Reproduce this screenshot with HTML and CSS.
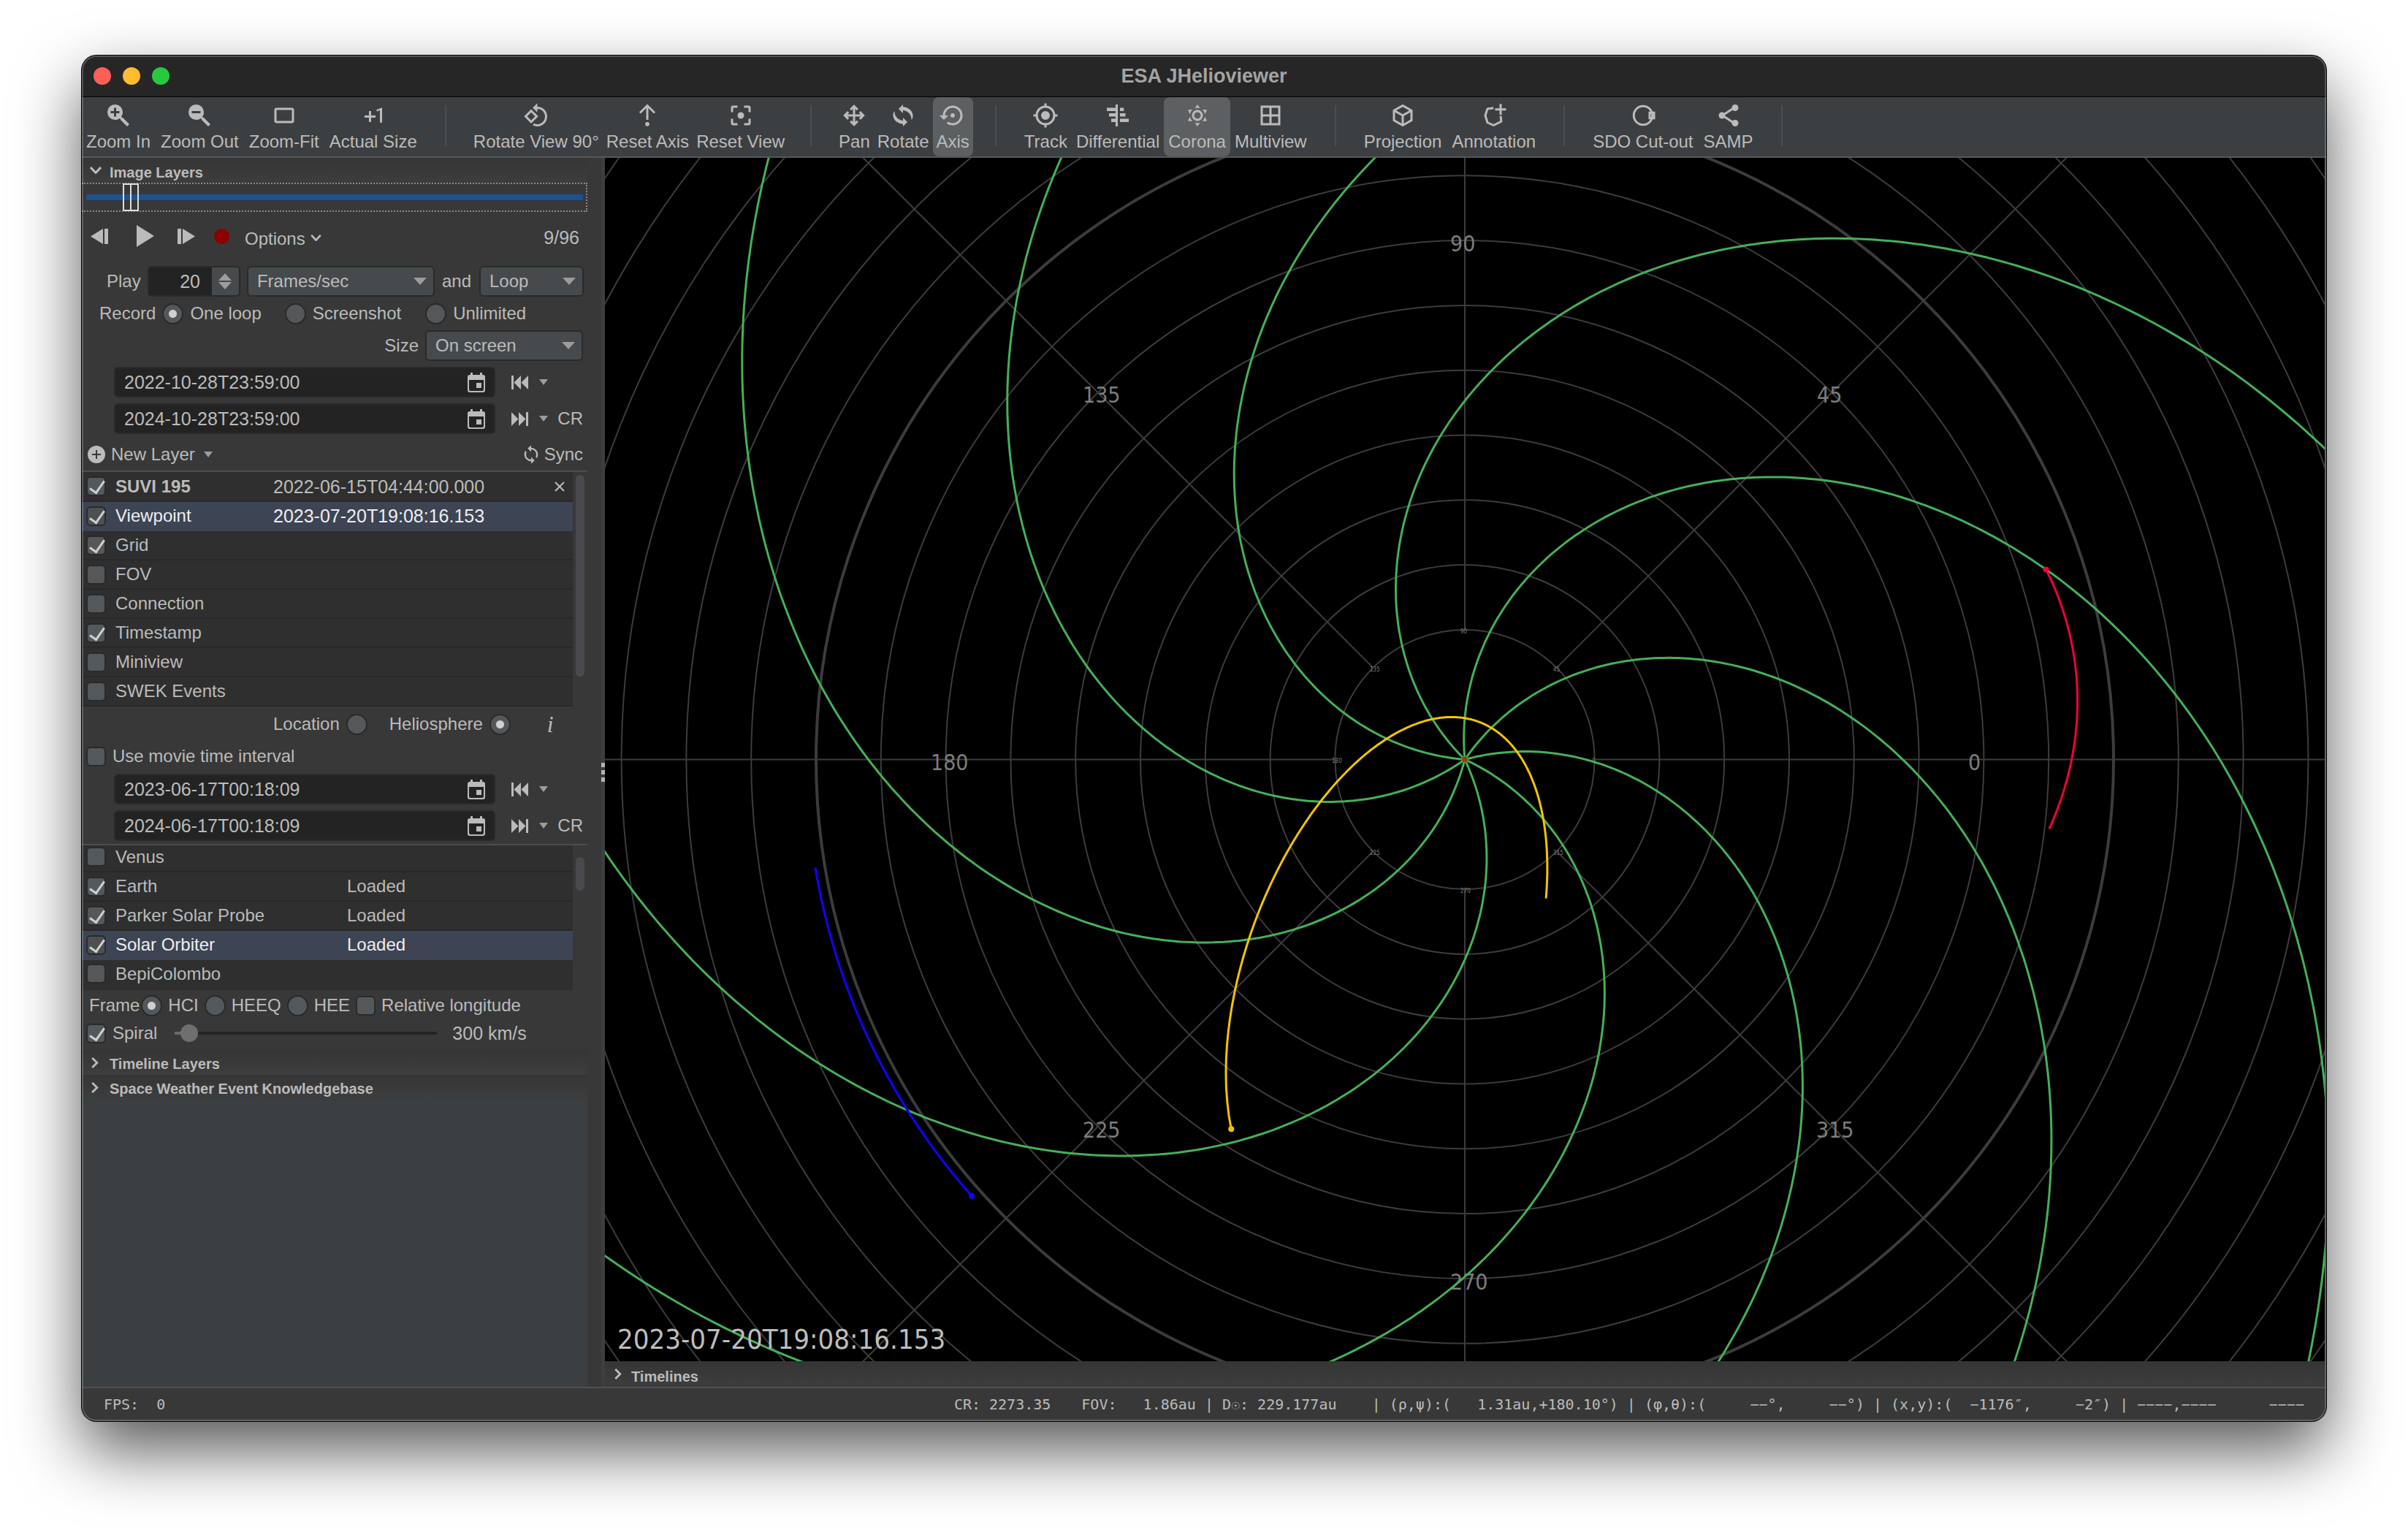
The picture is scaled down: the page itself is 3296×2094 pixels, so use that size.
FILE: index.html
```html
<!DOCTYPE html>
<html lang="en">
<head>
<meta charset="utf-8">
<title>ESA JHelioviewer</title>
<link rel="stylesheet" href="styles.css">
</head>
<body>
<svg class="symbols" aria-hidden="true">
  <symbol id="i-zoom-in" viewBox="0 0 24 24"><path d="M9,2A7,7 0 0,1 16,9C16,10.57 15.5,12 14.61,13.19L15.41,14H16L22,20L20,22L14,16V15.41L13.19,14.61C12,15.5 10.57,16 9,16A7,7 0 0,1 2,9A7,7 0 0,1 9,2M8,5V8H5V10H8V13H10V10H13V8H10V5H8Z"/></symbol>
  <symbol id="i-zoom-out" viewBox="0 0 24 24"><path d="M9,2A7,7 0 0,1 16,9C16,10.57 15.5,12 14.61,13.19L15.41,14H16L22,20L20,22L14,16V15.41L13.19,14.61C12,15.5 10.57,16 9,16A7,7 0 0,1 2,9A7,7 0 0,1 9,2M5,8V10H13V8H5Z"/></symbol>
  <symbol id="i-fit" viewBox="0 0 24 24"><path d="M19,17H5V7H19M19,5H5A2,2 0 0,0 3,7V17A2,2 0 0,0 5,19H19A2,2 0 0,0 21,17V7C21,5.89 20.1,5 19,5Z"/></symbol>
  <symbol id="i-plus-one" viewBox="0 0 24 24"><path d="M10,8H8V12H4V14H8V18H10V14H14V12H10V8M20,18.5H18V7.4L15,8.4V6.7L19.7,5H20V18.5Z"/></symbol>
  <symbol id="i-rotate-90" viewBox="0 0 24 24"><path d="M7.34,6.41L0.86,12.9L7.35,19.38L13.84,12.9L7.34,6.41M3.69,12.9L7.35,9.24L11,12.9L7.34,16.56L3.69,12.9M19.36,6.64C17.61,4.88 15.3,4 13,4V0.76L8.76,5L13,9.24V6C14.79,6 16.58,6.68 17.95,8.05C20.68,10.78 20.68,15.22 17.95,17.95C16.58,19.32 14.79,20 13,20C12.03,20 11.06,19.79 10.16,19.39L8.67,20.88C10,21.62 11.5,22 13,22C15.3,22 17.61,21.12 19.36,19.36C22.88,15.85 22.88,10.15 19.36,6.64Z"/></symbol>
  <symbol id="i-reset-axis" viewBox="0 0 24 24"><path d="M12,1.6L19.4,9L18,10.4L13,5.4V16H11V5.4L6,10.4L4.6,9ZM12,18A1.9,1.9 0 1,1 12,21.8A1.9,1.9 0 1,1 12,18Z"/></symbol>
  <symbol id="i-reset-view" viewBox="0 0 24 24"><path d="M12,9A3,3 0 1,1 12,15A3,3 0 1,1 12,9M19,19H15V21H19A2,2 0 0,0 21,19V15H19M19,3H15V5H19V9H21V5A2,2 0 0,0 19,3M5,5H9V3H5A2,2 0 0,0 3,5V9H5M5,15H3V19A2,2 0 0,0 5,21H9V19H5V15Z"/></symbol>
  <symbol id="i-pan" viewBox="0 0 24 24"><path d="M13,11H18L16.5,9.5L17.92,8.08L21.84,12L17.92,15.92L16.5,14.5L18,13H13V18L14.5,16.5L15.92,17.92L12,21.84L8.08,17.92L9.5,16.5L11,18V13H6L7.5,14.5L6.08,15.92L2.16,12L6.08,8.08L7.5,9.5L6,11H11V6L9.5,7.5L8.08,6.08L12,2.16L15.92,6.08L14.5,7.5L13,6V11Z"/></symbol>
  <symbol id="i-rotate" viewBox="0 0 24 24"><path d="M8,6L12,2V4.2C17.5,4.6 21.5,8.5 21,13C20.9,14.4 20.3,15.4 19.7,16.2C20,11.5 17,8.2 12,7.2V10ZM16,18L12,22V19.8C6.5,19.4 2.5,15.5 3,11C3.1,9.6 3.7,8.6 4.3,7.8C4,12.5 7,15.8 12,16.8V14Z"/></symbol>
  <symbol id="i-sync" viewBox="0 0 24 24"><path d="M12,18A6,6 0 0,1 6,12C6,11 6.25,10.03 6.7,9.2L5.24,7.74C4.46,8.97 4,10.43 4,12A8,8 0 0,0 12,20V23L16,19L12,15M12,4V1L8,5L12,9V6A6,6 0 0,1 18,12C18,13 17.75,13.97 17.3,14.8L18.76,16.26C19.54,15.03 20,13.57 20,12A8,8 0 0,0 12,4Z"/></symbol>
  <symbol id="i-axis" viewBox="0 0 24 24"><path d="M14,12A2,2 0 1,0 10,12A2,2 0 1,0 14,12M12,3A9,9 0 0,0 3,12H0L4,16L8,12H5A7,7 0 0,1 12,5A7,7 0 0,1 19,12A7,7 0 0,1 12,19C10.5,19 9.09,18.5 7.94,17.7L6.5,19.14C8.04,20.3 9.94,21 12,21A9,9 0 0,0 21,12A9,9 0 0,0 12,3Z"/></symbol>
  <symbol id="i-track" viewBox="0 0 24 24"><path d="M12,8A4,4 0 0,1 16,12A4,4 0 0,1 12,16A4,4 0 0,1 8,12A4,4 0 0,1 12,8M3.05,13H1V11H3.05C3.5,6.83 6.83,3.5 11,3.05V1H13V3.05C17.17,3.5 20.5,6.83 20.95,11H23V13H20.95C20.5,17.17 17.17,20.5 13,20.95V23H11V20.95C6.83,20.5 3.5,17.17 3.05,13M12,5A7,7 0 0,0 5,12A7,7 0 0,0 12,19A7,7 0 0,0 19,12A7,7 0 0,0 12,5Z"/></symbol>
  <symbol id="i-diff" viewBox="0 0 24 24"><path d="M10,2H12V22H10V18H6V15H10V13H4V10H10V8H2V5H10ZM14,5H17.5V8H14ZM14,10H19V13H14ZM14,15H22V18H14Z"/></symbol>
  <symbol id="i-corona" viewBox="0 0 24 24"><path fill-rule="evenodd" d="M12,7A5,5 0 1,1 12,17A5,5 0 1,1 12,7M12,9A3,3 0 1,0 12,15A3,3 0 1,0 12,9M12,2L14.39,5.42A7.7,7.7 0 0,0 9.61,5.42ZM12,22L9.61,18.58A7.7,7.7 0 0,0 14.39,18.58ZM3.34,7L7.5,6.65A7,7 0 0,0 5.14,10.79ZM3.36,17L5.12,13.23A7,7 0 0,0 7.5,17.37ZM20.65,7L18.88,10.79A7,7 0 0,0 16.5,6.65ZM20.64,17L16.5,17.36A7,7 0 0,0 18.87,13.22Z"/></symbol>
  <symbol id="i-multi" viewBox="0 0 24 24"><path fill-rule="evenodd" d="M3,3H21V21H3ZM5,5V11H11V5ZM13,5V11H19V5ZM5,13V19H11V13ZM13,13V19H19V13Z"/></symbol>
  <symbol id="i-cube" viewBox="0 0 24 24"><path d="M21,16.5C21,16.88 20.79,17.21 20.47,17.38L12.57,21.82C12.41,21.94 12.21,22 12,22C11.79,22 11.59,21.94 11.43,21.82L3.53,17.38C3.21,17.21 3,16.88 3,16.5V7.5C3,7.12 3.21,6.79 3.53,6.62L11.43,2.18C11.59,2.06 11.79,2 12,2C12.21,2 12.41,2.06 12.57,2.18L20.47,6.62C20.79,6.79 21,7.12 21,7.5V16.5M12,4.15L6.04,7.5L12,10.85L17.96,7.5L12,4.15M5,15.91L11,19.29V12.58L5,9.21V15.91M19,15.91V9.21L13,12.58V19.29L19,15.91Z"/></symbol>
  <symbol id="i-annotate" viewBox="0 0 24 24"><path d="M18,12.5L18.6,17.5L11.6,21L6,18.5L4,12L6,6L11.5,5.2" fill="none" stroke="currentColor" stroke-width="2" stroke-linejoin="round"/><path d="M17,1.5H19V5.5H23V7.5H19V11.5H17V7.5H13V5.5H17Z"/></symbol>
  <symbol id="i-cutout" viewBox="0 0 24 24"><circle cx="12" cy="12" r="8.5" fill="none" stroke="currentColor" stroke-width="2"/><path fill-rule="evenodd" d="M17,8.5H23V15.5H17ZM19,10.5V13.5H21.2V10.5Z"/></symbol>
  <symbol id="i-share" viewBox="0 0 24 24"><path d="M17.6,4.6L6.4,12L17.6,19.4" fill="none" stroke="currentColor" stroke-width="2"/><circle cx="18" cy="5" r="3"/><circle cx="6" cy="12" r="3"/><circle cx="18" cy="19" r="3"/></symbol>
  <symbol id="i-calendar" viewBox="0 0 24 27"><path fill-rule="evenodd" d="M4,0H7V3H17V0H20V3H21A3,3 0 0,1 24,6V24A3,3 0 0,1 21,27H3A3,3 0 0,1 0,24V6A3,3 0 0,1 3,3H4ZM2,10V23A2,2 0 0,0 4,25H20A2,2 0 0,0 22,23V10ZM12,14H19V21H12Z"/></symbol>
  <symbol id="i-skip-back" viewBox="0 0 23 19"><path d="M0,0H3V19H0ZM13,0V19L3.5,9.5ZM23,0V19L13.5,9.5Z"/></symbol>
  <symbol id="i-skip-fwd" viewBox="0 0 23 19"><path d="M20,0H23V19H20ZM0,0V19L9.5,9.5ZM10,0V19L19.5,9.5Z"/></symbol>
  <symbol id="i-chev-down" viewBox="0 0 16 10"><path d="M1,1L8,8.5L15,1" fill="none" stroke="currentColor" stroke-width="3"/></symbol>
  <symbol id="i-chev-right" viewBox="0 0 10 16"><path d="M1,1L8,8L1,15" fill="none" stroke="currentColor" stroke-width="3"/></symbol>
</svg>

<div class="window">
  <header class="titlebar">
    <div class="lights"><button class="light light-close" aria-label="Close"></button><button class="light light-min" aria-label="Minimise"></button><button class="light light-max" aria-label="Maximise"></button></div>
    <h1 class="title">ESA JHelioviewer</h1>
  </header>

  <nav class="toolbar">
    <div class="tool-group">
      <button class="tool"><svg><use href="#i-zoom-in"/></svg>Zoom In</button>
      <button class="tool"><svg><use href="#i-zoom-out"/></svg>Zoom Out</button>
      <button class="tool"><svg><use href="#i-fit"/></svg>Zoom-Fit</button>
      <button class="tool"><svg><use href="#i-plus-one"/></svg>Actual Size</button>
    </div>
    <div class="tool-group tight">
      <button class="tool"><svg><use href="#i-rotate-90"/></svg>Rotate View 90°</button>
      <button class="tool"><svg><use href="#i-reset-axis"/></svg>Reset Axis</button>
      <button class="tool"><svg><use href="#i-reset-view"/></svg>Reset View</button>
    </div>
    <div class="tool-group tight">
      <button class="tool"><svg><use href="#i-pan"/></svg>Pan</button>
      <button class="tool"><svg><use href="#i-rotate"/></svg>Rotate</button>
      <button class="tool tool-on"><svg><use href="#i-axis"/></svg>Axis</button>
    </div>
    <div class="tool-group plain-group">
      <button class="tool"><svg><use href="#i-track"/></svg>Track</button>
      <button class="tool"><svg><use href="#i-diff"/></svg>Differential</button>
      <button class="tool tool-on"><svg><use href="#i-corona"/></svg>Corona</button>
      <button class="tool"><svg><use href="#i-multi"/></svg>Multiview</button>
    </div>
    <div class="tool-group">
      <button class="tool"><svg><use href="#i-cube"/></svg>Projection</button>
      <button class="tool"><svg><use href="#i-annotate"/></svg>Annotation</button>
    </div>
    <div class="tool-group">
      <button class="tool"><svg><use href="#i-cutout"/></svg>SDO Cut-out</button>
      <button class="tool"><svg><use href="#i-share"/></svg>SAMP</button>
    </div>
  </nav>

  <main class="main">
    <aside class="sidebar">
      <div class="panels">
        <button class="section"><svg class="chev chev-down"><use href="#i-chev-down"/></svg>Image Layers</button>
        <div class="panel">
          <div class="timeline"><input class="timeline-input" type="range" min="1" max="96" value="9" aria-label="Frame"></div>

          <div class="transport">
            <button class="plain" aria-label="Previous frame"><svg width="25" height="21" viewBox="0 0 25 21"><path d="M17,0V21L0,10.5ZM19,0H24V21H19Z"/></svg></button>
            <button class="plain" aria-label="Play"><svg width="24" height="30" viewBox="0 0 24 30"><path d="M0,0L24,15L0,30Z"/></svg></button>
            <button class="plain" aria-label="Next frame"><svg width="25" height="21" viewBox="0 0 25 21"><path d="M8,0V21L25,10.5ZM1,0H6V21H1Z"/></svg></button>
            <button class="record" aria-label="Record"></button>
            <button class="plain options">Options <svg width="15" height="9"><use href="#i-chev-down"/></svg></button>
            <span class="frame-count">9/96</span>
          </div>

          <div class="row row-play">
            <label for="speed">Play</label>
            <span class="spinner"><input id="speed" type="text" value="20"><span class="spin-buttons"><button class="spin-up" aria-label="Increase"></button><button class="spin-down" aria-label="Decrease"></button></span></span>
            <span class="select select-unit"><select aria-label="Speed unit"><option>Frames/sec</option></select></span>
            <label for="mode">and</label>
            <span class="select select-mode"><select id="mode"><option>Loop</option></select></span>
          </div>

          <div class="row row-record">
            <span class="record-label">Record</span>
            <label class="opt opt-one"><input type="radio" name="rec" checked>One loop</label>
            <label class="opt opt-shot"><input type="radio" name="rec">Screenshot</label>
            <label class="opt"><input type="radio" name="rec">Unlimited</label>
          </div>

          <div class="row row-size">
            <label for="size">Size</label>
            <span class="select select-size"><select id="size"><option>On screen</option></select></span>
          </div>

          <div class="dates">
            <div class="date-row">
              <span class="date"><input type="text" value="2022-10-28T23:59:00" aria-label="Start time"><button class="plain" aria-label="Pick date"><svg width="24" height="27"><use href="#i-calendar"/></svg></button></span>
              <button class="plain skip" aria-label="Shift back"><svg width="23" height="19"><use href="#i-skip-back"/></svg><i class="tri"></i></button>
            </div>
            <div class="date-row">
              <span class="date"><input type="text" value="2024-10-28T23:59:00" aria-label="End time"><button class="plain" aria-label="Pick date"><svg width="24" height="27"><use href="#i-calendar"/></svg></button></span>
              <button class="plain skip" aria-label="Shift forward"><svg width="23" height="19"><use href="#i-skip-fwd"/></svg><i class="tri"></i></button>
              <button class="plain cr">CR</button>
            </div>
          </div>

          <div class="row row-new">
            <button class="plain new-layer"><svg width="24" height="24" viewBox="0 0 24 24"><path fill-rule="evenodd" d="M12,0A12,12 0 1,1 12,24A12,12 0 1,1 12,0M11,6V11H6V13H11V18H13V13H18V11H13V6Z"/></svg>New Layer <i class="tri"></i></button>
            <button class="plain sync"><svg width="28" height="28"><use href="#i-sync"/></svg>Sync</button>
          </div>

          <div class="list">
            <table class="layers">
              <colgroup><col class="c-check"><col class="c-name"><col><col class="c-x"></colgroup>
              <tr><td><input type="checkbox" id="l1" checked></td><td><label for="l1"><b>SUVI 195</b></label></td><td class="num">2022-06-15T04:44:00.000</td><td><button class="plain" aria-label="Remove layer"><svg width="14" height="14" viewBox="0 0 14 14"><path d="M1,1L13,13M13,1L1,13" fill="none" stroke="currentColor" stroke-width="2"/></svg></button></td></tr>
              <tr class="selected"><td><input type="checkbox" id="l2" checked></td><td><label for="l2">Viewpoint</label></td><td class="num">2023-07-20T19:08:16.153</td><td></td></tr>
              <tr><td><input type="checkbox" id="l3" checked></td><td><label for="l3">Grid</label></td><td></td><td></td></tr>
              <tr><td><input type="checkbox" id="l4"></td><td><label for="l4">FOV</label></td><td></td><td></td></tr>
              <tr><td><input type="checkbox" id="l5"></td><td><label for="l5">Connection</label></td><td></td><td></td></tr>
              <tr><td><input type="checkbox" id="l6" checked></td><td><label for="l6">Timestamp</label></td><td></td><td></td></tr>
              <tr><td><input type="checkbox" id="l7"></td><td><label for="l7">Miniview</label></td><td></td><td></td></tr>
              <tr><td><input type="checkbox" id="l8"></td><td><label for="l8">SWEK Events</label></td><td></td><td></td></tr>
            </table>
            <div class="scroll"><div class="thumb thumb-long"></div></div>
          </div>

          <div class="row row-location">
            <label class="opt">Location<input type="radio" name="loc"></label>
            <label class="opt opt-helio">Heliosphere<input type="radio" name="loc" checked></label>
            <button class="plain info" aria-label="Info">i</button>
          </div>
          <div class="row row-interval"><label class="opt"><input type="checkbox">Use movie time interval</label></div>

          <div class="dates dates-view">
            <div class="date-row">
              <span class="date"><input type="text" value="2023-06-17T00:18:09" aria-label="Viewpoint start"><button class="plain" aria-label="Pick date"><svg width="24" height="27"><use href="#i-calendar"/></svg></button></span>
              <button class="plain skip" aria-label="Shift back"><svg width="23" height="19"><use href="#i-skip-back"/></svg><i class="tri"></i></button>
            </div>
            <div class="date-row">
              <span class="date"><input type="text" value="2024-06-17T00:18:09" aria-label="Viewpoint end"><button class="plain" aria-label="Pick date"><svg width="24" height="27"><use href="#i-calendar"/></svg></button></span>
              <button class="plain skip" aria-label="Shift forward"><svg width="23" height="19"><use href="#i-skip-fwd"/></svg><i class="tri"></i></button>
              <button class="plain cr">CR</button>
            </div>
          </div>

          <div class="list list-bodies">
            <table class="layers bodies">
              <colgroup><col class="c-check"><col class="c-body"><col></colgroup>
              <tr><td><input type="checkbox" id="b1"></td><td><label for="b1">Venus</label></td><td></td></tr>
              <tr><td><input type="checkbox" id="b2" checked></td><td><label for="b2">Earth</label></td><td>Loaded</td></tr>
              <tr><td><input type="checkbox" id="b3" checked></td><td><label for="b3">Parker Solar Probe</label></td><td>Loaded</td></tr>
              <tr class="selected"><td><input type="checkbox" id="b4" checked></td><td><label for="b4">Solar Orbiter</label></td><td>Loaded</td></tr>
              <tr><td><input type="checkbox" id="b5"></td><td><label for="b5">BepiColombo</label></td><td></td></tr>
            </table>
            <div class="scroll"><div class="thumb thumb-short"></div></div>
          </div>

          <div class="row row-frame">
            <span>Frame</span>
            <label class="opt"><input type="radio" name="frame" checked>HCI</label>
            <label class="opt"><input type="radio" name="frame">HEEQ</label>
            <label class="opt"><input type="radio" name="frame">HEE</label>
            <label class="opt"><input type="checkbox">Relative longitude</label>
          </div>
          <div class="row row-spiral">
            <label class="opt"><input type="checkbox" checked>Spiral</label>
            <input class="speed" type="range" min="250" max="2500" value="300" aria-label="Spiral speed">
            <span class="num">300 km/s</span>
          </div>
        </div>
        <button class="section section-closed"><svg class="chev chev-right"><use href="#i-chev-right"/></svg>Timeline Layers</button>
        <button class="section section-closed"><svg class="chev chev-right"><use href="#i-chev-right"/></svg>Space Weather Event Knowledgebase</button>
      </div>
      <div class="gutter"></div>
      <div class="divider"><i></i><i></i><i></i></div>
    </aside>

    <section class="stage">
      <div class="view">
        <svg class="sky" viewBox="-1177 -824 2354 1648" preserveAspectRatio="xMidYMid slice">
          <g id="grid"></g>
          <g class="small-labels">
            <text x="174" y="4">0</text><text x="121" y="-121">45</text><text x="-6" y="-173">90</text><text x="-130" y="-121">135</text><text x="-182" y="4">180</text><text x="-130" y="130">225</text><text x="-6" y="182">270</text><text x="121" y="130">315</text>
          </g>
          <g class="labels">
            <text x="689" y="14">0</text><text x="482" y="-489">45</text><text x="-20" y="-696">90</text><text x="-523" y="-489">135</text><text x="-731" y="14">180</text><text x="-523" y="517">225</text><text x="-20" y="725">270</text><text x="481" y="517">315</text>
          </g>
          <g id="spirals"></g>
          <circle class="sun" r="4"/>
          <g id="orbits"></g>
        </svg>
        <p class="stamp">2023-07-20T19:08:16.153</p>
      </div>
      <button class="section section-stage"><svg class="chev chev-right"><use href="#i-chev-right"/></svg>Timelines</button>
    </section>
  </main>

  <footer class="status">
    <span>FPS:  0</span>
    <span class="status-cr">CR: 2273.35</span>
    <span>FOV:   1.86au | D<i class="cell">☉</i>: 229.177au    | (ρ,ψ):(   1.31au,+180.10°) | (φ,θ):(     −−°,     −−°) | (x,y):(  −1176″,     −2″) | −−−−,−−−−      −−−−</span>
  </footer>
</div>
<script src="script.js"></script>
</body>
</html>
```
FILE: styles.css
```css
* { box-sizing: border-box; }

body {
  margin: 0;
  min-height: 100vh;
  display: flex;
  padding: 76px 112px 149px;
  background: #fff;
  color: #bbb;
  font: 24px/28px "Liberation Sans", Arial, sans-serif;
}

button, input, select { font: inherit; color: inherit; margin: 0; }
button { border: 0; padding: 0; background: none; }
svg { fill: currentColor; display: block; flex: none; }
.symbols { position: absolute; width: 0; height: 0; }

.window {
  position: relative;
  flex: 1;
  min-width: 0;
  display: flex;
  flex-direction: column;
  border-radius: 20px;
  overflow: hidden;
  background: #383838;
  box-shadow: 0 0 0 1px #000, 0 40px 90px rgba(0, 0, 0, .66);
}
.window::after {
  content: "";
  position: absolute;
  inset: 0;
  border-radius: 20px;
  box-shadow: inset 0 0 0 2px rgba(255, 255, 255, .22);
  pointer-events: none;
}

/* Title bar */
.titlebar {
  display: grid;
  grid-template-columns: 1fr auto 1fr;
  align-items: center;
  height: 57px;
  padding: 0 16px;
  background: #262626;
  border-bottom: 1px solid #000;
}
.lights { display: flex; gap: 16px; }
.light { width: 24px; height: 24px; border-radius: 50%; }
.light-close { background: #ff5f57; }
.light-min { background: #febc2e; }
.light-max { background: #28c840; }
.title { margin: 0; font-size: 27px; font-weight: 700; color: #a3a3a3; }

/* Toolbar */
.toolbar {
  display: flex;
  height: 83px;
  background: #3c3f41;
  border-bottom: 2px solid #54585a;
}
.tool-group { display: flex; gap: 2px; position: relative; padding-right: 34px; margin-right: 32px; }
.tool-group:last-child { margin-right: 0; }
.tool-group::after {
  content: "";
  position: absolute;
  right: 0;
  top: 11px;
  width: 2px;
  height: 56px;
  background: #4b4e50;
}
.tight, .plain-group { gap: 0; }
.tight { padding-right: 32px; }
.tool {
  display: flex;
  flex-direction: column;
  align-items: center;
  gap: 4px;
  padding: 7px 6px 0;
  border-radius: 8px;
  white-space: nowrap;
}
.tight .tool { padding: 7px 5px 0; }
.tool svg { width: 36px; height: 36px; }
.tool-on { background: #5c6062; }

/* Main split */
.main { flex: 1; display: flex; min-height: 0; }
.sidebar { display: flex; width: 716px; flex: none; }
.panels { flex: 1; min-width: 0; background: #3c3f41; }
.gutter { width: 19px; background: #383838; }
.divider {
  width: 5px;
  display: flex;
  flex-direction: column;
  justify-content: center;
  gap: 4px;
  background: #3c3f41;
}
.divider i { height: 6px; background: #b4b4b4; }

.section {
  display: flex;
  align-items: center;
  width: 100%;
  height: 34px;
  padding: 6px 0 0 38px;
  position: relative;
  font-size: 20px;
  font-weight: 700;
  background: linear-gradient(#353535, #3d3d3d);
}
.chev { position: absolute; }
.chev-down { left: 11px; top: 12px; width: 16px; height: 10px; }
.chev-right { left: 13px; top: 10px; width: 10px; height: 15px; }
.section-closed { height: 32px; margin-bottom: 2px; }
.panel { background: #383838; }

.timeline {
  height: 40px;
  padding-right: 4px;
  border: 2px dotted #8a8a8a;
  border-left-width: 0;
  background: linear-gradient(#1d5290, #1d5290) 6px 14px / calc(100% - 10px) 8px no-repeat;
}
.timeline-input { appearance: none; display: block; width: 100%; height: 36px; background: none; }
.timeline-input::-webkit-slider-thumb {
  appearance: none;
  width: 22px;
  height: 38px;
  border: 2px solid #ddd;
  background: linear-gradient(#ddd, #ddd) center / 2px 100% no-repeat;
}

.plain { display: flex; align-items: center; }
.transport { display: flex; align-items: center; height: 66px; padding: 0 11px 0 12px; margin-bottom: 8px; }
.transport .plain:nth-child(2) { margin: 0 31px 0 38px; }
.record { width: 21px; height: 21px; margin: 0 21px 0 26px; border-radius: 50%; background: #8b0000; }
.options { gap: 7px; padding-top: 8px; }
.options svg { margin-bottom: 4px; }
.frame-count { margin-left: auto; padding-top: 4px; font-size: 25px; }

.row { display: flex; align-items: center; white-space: nowrap; }
.row-play { height: 42px; padding: 0 5px 0 34px; }
.spinner {
  display: flex;
  width: 127px;
  height: 42px;
  margin: 0 9px 0 auto;
  border: 2px solid #2a2a2a;
  border-radius: 6px;
  background: #232323;
  overflow: hidden;
}
.spinner input { width: 86px; padding: 0 16px 0 0; border: 0; background: none; text-align: right; font-size: 25px; }
.spin-buttons { flex: 1; display: flex; flex-direction: column; justify-content: center; align-items: center; gap: 2px; background: #464a4c; }
.spin-up, .spin-down { border: 9px solid transparent; }
.spin-up { border-top: 0; border-bottom: 10px solid #9c9c9c; }
.spin-down { border-bottom: 0; border-top: 10px solid #9c9c9c; }

.select { position: relative; display: block; height: 42px; }
.select::after {
  content: "";
  position: absolute;
  right: 11px;
  top: 16px;
  border: 9px solid transparent;
  border-top: 10px solid #9c9c9c;
  border-bottom: 0;
  pointer-events: none;
}
.select select {
  appearance: none;
  width: 100%;
  height: 100%;
  padding: 0 12px;
  border: 2px solid #2a2a2a;
  border-radius: 6px;
  background: #464a4c;
}
.select-unit { width: 257px; margin-right: 10px; }
.select-mode { width: 143px; margin-left: 11px; }
.select-size { width: 216px; }

.row-record { height: 46px; padding-left: 24px; }
.record-label { margin-right: 9px; }
.opt { display: flex; align-items: center; gap: 9px; }
.opt-one { margin-right: 32px; }
.opt-shot { margin-right: 33px; }
.row-size { height: 42px; padding-right: 6px; justify-content: flex-end; gap: 9px; }

input[type="radio"], input[type="checkbox"] {
  appearance: none;
  position: relative;
  flex: none;
  display: block;
  border: 2px solid #2a2a2a;
  background: #54585b;
}
input[type="radio"] { width: 29px; height: 29px; border-radius: 50%; }
input[type="radio"]:checked { background: radial-gradient(circle, #d0d0d0 5px, #54585b 6px); }
input[type="checkbox"] { width: 27px; height: 27px; border-radius: 6px; }
input[type="checkbox"]:checked::after {
  content: "";
  position: absolute;
  left: 7px;
  top: 0;
  width: 9px;
  height: 18px;
  border: solid #d0d0d0;
  border-width: 0 3px 3px 0;
  transform: rotate(35deg);
}

.dates { display: flex; flex-direction: column; gap: 8px; padding: 8px 6px 0 44px; }
.date-row { display: flex; align-items: center; }
.date {
  display: flex;
  align-items: center;
  width: 522px;
  height: 42px;
  margin-right: 22px;
  padding: 0 12px;
  border: 2px solid #2a2a2a;
  border-radius: 6px;
  background: #232323;
}
.date input { flex: 1; min-width: 0; padding: 0; border: 0; background: none; font-size: 25px; }
.skip { gap: 15px; }
.tri { border: 6px solid transparent; border-top: 8px solid #9c9c9c; border-bottom: 0; }
.cr { margin-left: auto; }
.row-new { height: 50px; padding: 6px 6px 0 8px; justify-content: space-between; }
.new-layer { gap: 8px; }
.new-layer .tri { margin-left: 4px; }
.sync { gap: 4px; }

.list { display: flex; align-items: flex-start; border-top: 2px solid #4d4d4d; overflow: hidden; }
.layers { flex: 1; table-layout: fixed; border-collapse: collapse; background: #2f2f2f; }
.layers td { height: 40px; padding: 0; border-bottom: 2px solid #282828; white-space: nowrap; }
.layers td:first-child { padding-left: 6px; }
.layers label { display: block; }
.num { font-size: 25px; }
.c-check { width: 46px; }
.c-name { width: 216px; }
.c-x { width: 25px; }
.c-body { width: 317px; }
.selected { background: #3d4454; color: #eee; }
.selected td { border-bottom-color: #3d4454; }
.selected input { background: #4d4f52; }
.scroll { width: 20px; padding: 4px 4px 0; }
.thumb { border-radius: 6px; background: #4a4a4e; }
.thumb-long { height: 276px; }
.thumb-short { height: 46px; margin-top: 12px; }

.row-location { height: 50px; padding: 0 0 2px 262px; }
.opt-helio { margin-left: 30px; }
.info { margin-left: 50px; font: italic 32px/32px "Liberation Serif", serif; }
.row-interval { height: 36px; padding-left: 6px; }
.dates-view { padding-top: 6px; margin-bottom: 4px; }
.list-bodies { height: 202px; }
.bodies { margin-top: -4px; border-bottom: 4px solid #2f2f2f; }

.row-frame { height: 38px; padding-left: 10px; gap: 2px; }
.row-frame .opt { margin-right: 6px; gap: 8px; }
.row-spiral { height: 42px; padding: 0 0 4px 6px; }
.speed { appearance: none; width: 359px; height: 24px; margin: 0 21px 0 24px; border-radius: 2px; background: linear-gradient(90deg, #6a6a6a 20px, #242424 20px) center / 100% 4px no-repeat; }
.speed::-webkit-slider-thumb { appearance: none; width: 24px; height: 24px; border-radius: 50%; background: #6e6f70; }

/* Heliosphere view */
.stage { flex: 1; min-width: 0; display: flex; flex-direction: column; padding-right: 2px; }
.view { flex: 1; position: relative; overflow: hidden; background: #000; }
.sky { position: absolute; inset: 0; width: 100%; height: 100%; fill: none; }
.ring, .ray { stroke: #3c3c3c; stroke-width: 2; }
.ring-au { stroke-width: 4; }
.labels, .small-labels { fill: #7c7c7c; font-family: "DejaVu Sans Condensed", "DejaVu Sans", sans-serif; font-stretch: condensed; }
.labels { font-size: 30px; }
.small-labels { font-size: 8px; }
.spiral { stroke: #45b058; stroke-width: 3; }
.orbit { stroke-width: 3; }
.sun { fill: #a03c10; }
.stamp {
  position: absolute;
  left: 17px;
  bottom: 8px;
  margin: 0;
  font: condensed 38px/44px "DejaVu Sans Condensed", "DejaVu Sans", sans-serif;
  color: #bdbdbd;
}
.section-stage { height: 35px; padding-left: 36px; }

.status {
  display: flex;
  align-items: center;
  height: 47px;
  padding: 0 30px 2px 30px;
  border-top: 2px solid #4f4f4f;
  font: 20px/24px "DejaVu Sans Mono", monospace;
  white-space: pre;
}
.status-cr { margin: 0 42px 0 auto; }
.cell { display: inline-block; width: 12px; font: normal 14px/20px "DejaVu Sans", sans-serif; }
```
FILE: script.js
```js
// Units are screen pixels with the Sun at the origin; y points down.
const AU = 888;
const MAX_R = 1500;
const NS = "http://www.w3.org/2000/svg";

function add(parent, tag, attrs) {
  const el = document.createElementNS(NS, tag);
  for (const k in attrs) el.setAttribute(k, attrs[k]);
  document.getElementById(parent).appendChild(el);
}

// Rings every 0.1 au from 0.2 au, the 1 au ring is heavier.
for (let i = 2; i <= 16; i++) {
  add("grid", "circle", { r: AU * i / 10, class: i === 10 ? "ring ring-au" : "ring" });
}

// Rays every 45 degrees.
for (let a = 0; a < 360; a += 45) {
  const c = Math.cos(a * Math.PI / 180), s = Math.sin(a * Math.PI / 180);
  add("grid", "line", { x1: c * AU / 5, y1: s * AU / 5, x2: c * MAX_R, y2: s * MAX_R, class: "ray" });
}

// Parker spiral: angle falls linearly with distance.
const PX_PER_RAD = 0.7 * AU;
for (let k = 0; k < 9; k++) {
  const start = (95.25 + 40 * k) * Math.PI / 180;
  let d = "M0 0";
  for (let r = 6; r <= MAX_R; r += 6) {
    const t = start - r / PX_PER_RAD;
    d += `L${(r * Math.cos(t)).toFixed(1)} ${(-r * Math.sin(t)).toFixed(1)}`;
  }
  add("spirals", "path", { d, class: "spiral" });
}

// Orbit arcs as focal conics, 1/r = a + b cos(t) + c sin(t), from one angle
// to another in degrees; the marker sits on the last point.
const orbits = [
  { color: "#f5c400", a: 0.009831, b: 0.0029, c: -0.00782, from: 59.7, to: -237.7 },
  { color: "#f0003c", a: 0.002523, b: -0.001319, c: 0.00024, from: 6.77, to: -18.1 },
  { color: "#1400ff", a: 0.0011095, b: 0, c: 0, from: 170.56, to: 138.5 }
];
for (const { color, a, b, c, from, to } of orbits) {
  const STEPS = 240;
  const pts = [];
  for (let i = 0; i <= STEPS; i++) {
    const t = (from + (to - from) * i / STEPS) * Math.PI / 180;
    const r = 1 / (a + b * Math.cos(t) + c * Math.sin(t));
    pts.push([(r * Math.cos(t)).toFixed(1), (r * Math.sin(t)).toFixed(1)]);
  }
  add("orbits", "path", { d: "M" + pts.join("L"), class: "orbit", stroke: color });
  add("orbits", "circle", { cx: pts[STEPS][0], cy: pts[STEPS][1], r: 4, fill: color });
}
```
